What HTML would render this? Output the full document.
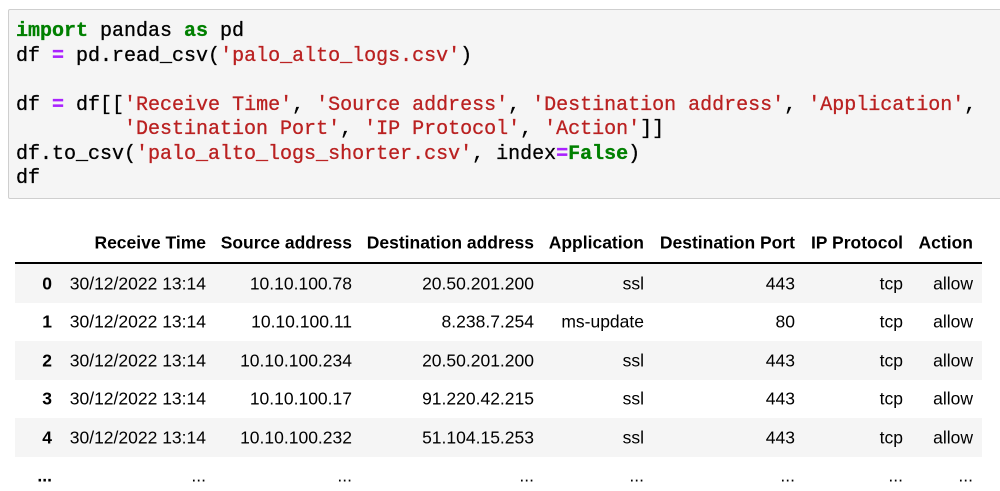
<!DOCTYPE html>
<html><head><meta charset="utf-8"><style>
body{margin:0;width:1000px;height:491px;background:#fff;overflow:hidden;position:relative;font-family:"Liberation Sans",sans-serif}
.code{position:absolute;left:8px;top:9px;width:1000px;height:188px;background:#f5f5f5;border:1px solid #cfcfcf;border-radius:2px}
pre{margin:0;position:absolute;left:16px;top:20px;font-family:"Liberation Mono",monospace;font-size:20px;line-height:24.5px;color:#000;-webkit-text-stroke:0.3px currentColor}
.k{color:#008000;font-weight:bold}.o{color:#aa22ff;font-weight:bold}.s{color:#ba2121}
.row{position:absolute;left:15px;width:967px;height:38.5px}
.c{position:absolute;font-size:17.5px;color:#000;white-space:nowrap;transform:translateY(-50%)}
.h{font-weight:bold}
</style></head><body>
<div class="code"></div>
<pre><span class="k">import</span> pandas <span class="k">as</span> pd
df <span class="o">=</span> pd.read_csv(<span class="s">'palo_alto_logs.csv'</span>)

df <span class="o">=</span> df[[<span class="s">'Receive Time'</span>, <span class="s">'Source address'</span>, <span class="s">'Destination address'</span>, <span class="s">'Application'</span>,
         <span class="s">'Destination Port'</span>, <span class="s">'IP Protocol'</span>, <span class="s">'Action'</span>]]
df.to_csv(<span class="s">'palo_alto_logs_shorter.csv'</span>, index<span class="o">=</span><span class="k">False</span>)
df</pre>
<div style="position:absolute;left:15px;top:262px;width:967px;height:2px;background:#000"></div>
<div class="row" style="top:264px;background:#f5f5f5"></div>
<div class="row" style="top:341px;background:#f5f5f5"></div>
<div class="row" style="top:418px;background:#f5f5f5"></div>
<div id="t"></div>
<script>
var R=[52,206,352,534,644,795,903,973];
var rows=[["","Receive Time","Source address","Destination address","Application","Destination Port","IP Protocol","Action"],
["0","30/12/2022 13:14","10.10.100.78","20.50.201.200","ssl","443","tcp","allow"],
["1","30/12/2022 13:14","10.10.100.11","8.238.7.254","ms-update","80","tcp","allow"],
["2","30/12/2022 13:14","10.10.100.234","20.50.201.200","ssl","443","tcp","allow"],
["3","30/12/2022 13:14","10.10.100.17","91.220.42.215","ssl","443","tcp","allow"],
["4","30/12/2022 13:14","10.10.100.232","51.104.15.253","ssl","443","tcp","allow"],
["...","...","...","...","...","...","...","..."]];
var Y=[243,284,322,361,399,438,476],h="";
rows.forEach(function(r,i){r.forEach(function(t,j){
var b=(i==0||j==0)?" h":"";
h+='<div class="c'+b+'" style="right:'+(1000-R[j])+'px;top:'+Y[i]+'px">'+t+'</div>';});});
document.getElementById("t").innerHTML=h;
</script>
</body></html>
